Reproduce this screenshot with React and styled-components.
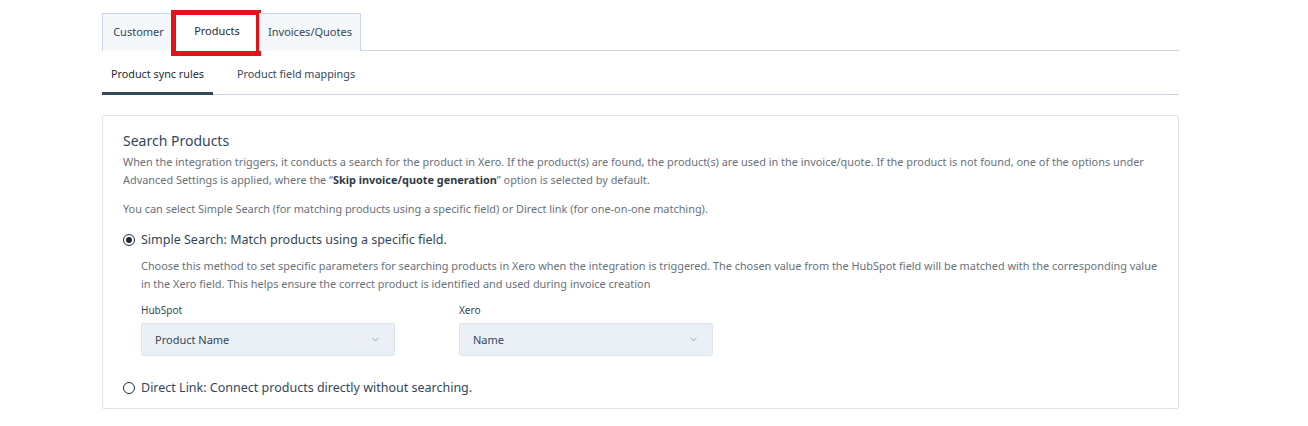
import styled, { createGlobalStyle } from "styled-components";
import { useState } from "react";

const GlobalStyle = createGlobalStyle`
  html, body {
    margin: 0;
    padding: 0;
    background: #ffffff;
    font-family: "Noto Sans", "Liberation Sans", sans-serif;
    color: #33475b;
  }
  * {
    box-sizing: border-box;
  }
`;

const ChevronDown = () => (
  <svg width="9" height="9" viewBox="0 0 10 10" fill="none">
    <path d="M2 3.5L5 6.5L8 3.5" stroke="#7c98b6" strokeWidth="1" strokeLinecap="round" strokeLinejoin="round" />
  </svg>
);

const App = () => {
  const [method, setMethod] = useState("simple");

  return (
    <>
      <GlobalStyle />
      <Page>
        <TabBar>
          <Tab width={73}>Customer</Tab>
          <Tab width={86} active highlighted>
            Products
          </Tab>
          <Tab width={102}>Invoices/Quotes</Tab>
        </TabBar>

        <SubTabBar>
          <SubTab active>Product sync rules</SubTab>
          <SubTab>Product field mappings</SubTab>
        </SubTabBar>

        <Card>
          <CardTitle>Search Products</CardTitle>
          <Paragraph>
            When the integration triggers, it conducts a search for the product in Xero. If the product(s) are found, the
            product(s) are used in the invoice/quote. If the product is not found, one of the options under Advanced
            Settings is applied, where the “<strong>Skip invoice/quote generation</strong>” option is selected by default.
          </Paragraph>
          <Paragraph spaced>
            You can select Simple Search (for matching products using a specific field) or Direct link (for one-on-one
            matching).
          </Paragraph>

          <RadioRow onClick={() => setMethod("simple")}>
            <Radio checked={method === "simple"} />
            Simple Search: Match products using a specific field.
          </RadioRow>

          <Indented>
            <Paragraph>
              Choose this method to set specific parameters for searching products in Xero when the integration is
              triggered. The chosen value from the HubSpot field will be matched with the corresponding value in the
              Xero field. This helps ensure the correct product is identified and used during invoice creation
            </Paragraph>

            <FieldRow>
              <Field>
                <FieldLabel>HubSpot</FieldLabel>
                <Select>
                  <span>Product Name</span>
                  <ChevronDown />
                </Select>
              </Field>
              <Field>
                <FieldLabel>Xero</FieldLabel>
                <Select>
                  <span>Name</span>
                  <ChevronDown />
                </Select>
              </Field>
            </FieldRow>
          </Indented>

          <RadioRow last onClick={() => setMethod("direct")}>
            <Radio checked={method === "direct"} />
            Direct Link: Connect products directly without searching.
          </RadioRow>
        </Card>
      </Page>
    </>
  );
};

export default App;

const Page = styled.div`
  width: 1077px;
  margin-left: 102px;
  padding-top: 13px;
`;

const TabBar = styled.div`
  display: flex;
  height: 38px;
  border-bottom: 1px solid #cbd6e2;
`;

const Tab = styled.div`
  position: relative;
  display: flex;
  align-items: center;
  justify-content: center;
  width: ${(props) => props.width}px;
  height: 38px;
  padding-bottom: 3px;
  font-size: 11px;
  color: ${(props) => (props.active ? "#1e2a36" : "#33475b")};
  background: ${(props) => (props.active ? "#ffffff" : "#f5f8fa")};
  border: 1px solid #cbd6e2;
  border-bottom: ${(props) => (props.active ? "1px solid #ffffff" : "none")};
  margin-left: -1px;
  &:first-child {
    margin-left: 0;
  }

  ${(props) =>
    props.highlighted &&
    `
    &::after {
      content: "";
      position: absolute;
      left: -4px;
      right: -2px;
      top: -4px;
      bottom: -6px;
      border: 5px solid #e3131b;
      pointer-events: none;
    }
  `}
`;

const SubTabBar = styled.div`
  display: flex;
  height: 44px;
  border-bottom: 1px solid #cbd6e2;
`;

const SubTab = styled.div`
  display: flex;
  align-items: center;
  padding: ${(props) => (props.active ? "4px 9px 0 9px" : "4px 24px 0 24px")};
  font-size: 10.8px;
  color: ${(props) => (props.active ? "#1e2a36" : "#33475b")};
  border-bottom: 3px solid ${(props) => (props.active ? "#33475b" : "transparent")};
  margin-bottom: -1px;
`;

const Card = styled.div`
  margin-top: 20px;
  border: 1px solid #dfe3eb;
  border-radius: 2px;
  padding: 15px 20px 12px 20px;
`;

const CardTitle = styled.div`
  font-size: 14px;
  color: #33475b;
  margin-bottom: 3px;
`;

const Paragraph = styled.p`
  margin: ${(props) => (props.spaced ? "11px 0 0 0" : "0")};
  font-size: 10.9px;
  line-height: 18px;
  color: #68717c;
  strong {
    color: #2f3a46;
    font-weight: 700;
  }
`;

const RadioRow = styled.label`
  display: flex;
  align-items: center;
  gap: 6px;
  margin-top: ${(props) => (props.last ? "23px" : "13px")};
  font-size: 12.5px;
  color: #33475b;
  cursor: pointer;
`;

const Radio = styled.span`
  flex: none;
  width: 12px;
  height: 12px;
  border-radius: 50%;
  border: 1.3px solid #1e2a36;
  display: inline-flex;
  align-items: center;
  justify-content: center;
  &::after {
    content: "";
    width: 6px;
    height: 6px;
    border-radius: 50%;
    background: ${(props) => (props.checked ? "#1e2a36" : "transparent")};
  }
`;

const Indented = styled.div`
  padding-left: 18px;
  margin-top: 9px;
`;

const FieldRow = styled.div`
  display: flex;
  gap: 64px;
  margin-top: 10px;
`;

const Field = styled.div`
  display: flex;
  flex-direction: column;
  gap: 6px;
`;

const FieldLabel = styled.div`
  font-size: 10px;
  color: #33475b;
`;

const Select = styled.div`
  width: 254px;
  height: 33px;
  display: flex;
  align-items: center;
  justify-content: space-between;
  padding: 0 14px 0 13px;
  background: #eaf0f6;
  border: 1px solid #dbe3ec;
  border-radius: 3px;
  font-size: 11px;
  color: #33475b;
`;
